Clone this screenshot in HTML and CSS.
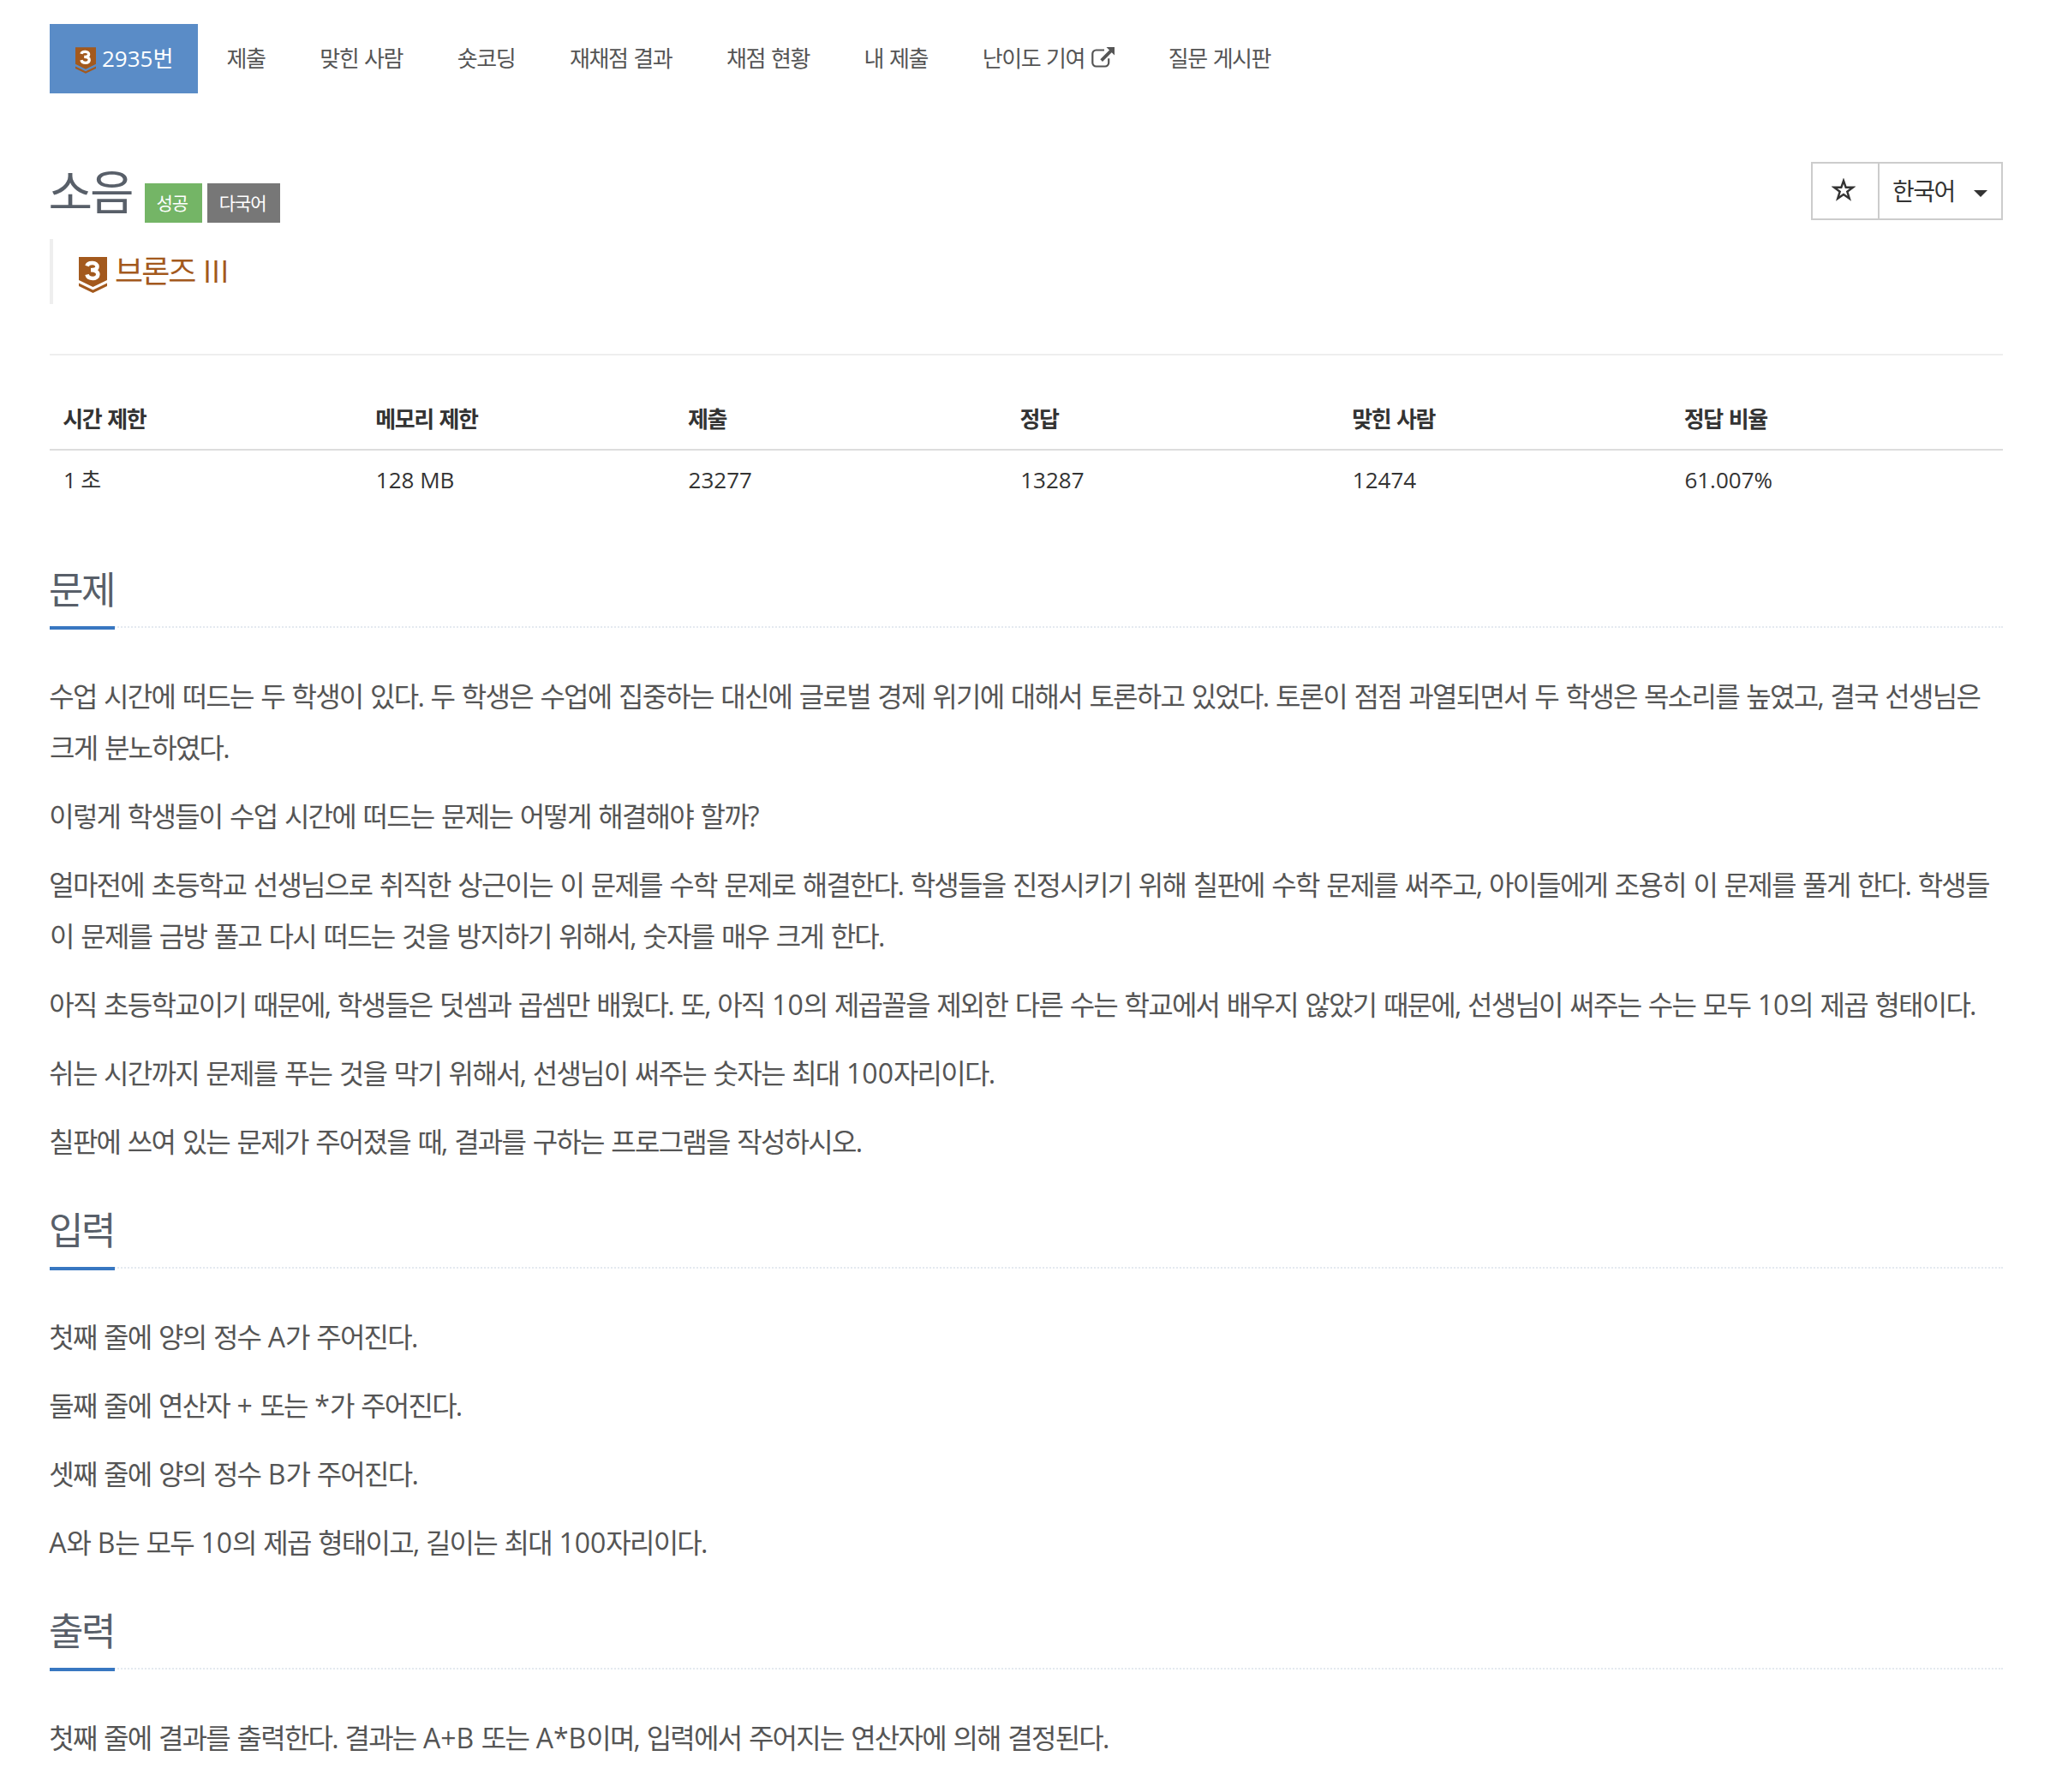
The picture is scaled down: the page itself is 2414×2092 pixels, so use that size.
FILE: index.html
```
<!DOCTYPE html>
<html lang="ko">
	<head>
		<meta charset="UTF-8" />
		<title>2935번: 소음</title>
		<link rel="stylesheet" href="styles.css">
	</head>
	<body>
		<svg width="0" height="0" class="sprite">
			<symbol id="tier" viewBox="0 0 33 42">
				<path fill="#a3591d" d="M0 0h33v27L16.500 35 0 27z" />
				<path fill="#a3591d" d="M0 30.500l16.500 8 16.500-8v3.500L16.500 42 0 34z" />
				<path fill="none" stroke="#fff" stroke-width="4.600" d="M9.500 10.500C11 5.500 22 6 21.500 11.500C21.300 14.500 18.500 15.300 14 15.300C20 15.300 22.500 17.500 22.300 20.500C22 26.500 11 26.500 9.500 20.500" />
			</symbol>
		</svg>
		<div class="container">
			<ul class="problem-menu">
				<li class="active"><a><svg class="tier-small"><use href="#tier" /></svg><span class="latin">2935</span>번</a></li>
				<li><a>제출</a></li>
				<li><a>맞힌 사람</a></li>
				<li><a>숏코딩</a></li>
				<li><a>재채점 결과</a></li>
				<li><a>채점 현황</a></li>
				<li><a>내 제출</a></li>
				<li>
					<a>난이도 기여 <svg class="external" viewBox="0 0 27 24"><path fill="none" stroke="#555" stroke-width="2.200" d="M15 3.500H5.500a4.200 4.200 0 0 0-4.200 4.200v10.600a4.200 4.200 0 0 0 4.200 4.200h10.500a4.200 4.200 0 0 0 4.200-4.200v-5" /><path fill="#555" d="M17.500 0H27v9.500l-3.300-3.200L13 17l-2.700-2.700L21 3.500z" /></svg></a>
				</li>
				<li><a>질문 게시판</a></li>
			</ul>

			<div class="page-header">
				<div class="title-row">
					<h1>소음</h1>
					<span class="label label-success">성공</span>
					<span class="label label-default">다국어</span>
				</div>
				<div class="btn-group">
					<button class="btn btn-star"><svg class="star" viewBox="0 0 28 27"><path fill="none" stroke="#333" stroke-width="2.400" d="M14 3l2.700 7.800h8.200l-6.600 4.900 2.500 8-6.800-4.800-6.800 4.800 2.500-8-6.600-4.900h8.200z" /></svg></button>
					<button class="btn btn-lang">한국어<span class="caret"></span></button>
				</div>
			</div>
			<blockquote><svg class="tier-large"><use href="#tier" /></svg>브론즈 <span class="latin">III</span></blockquote>
			<hr>

			<table>
				<thead>
					<tr>
						<th class="narrow">시간 제한</th>
						<th class="narrow">메모리 제한</th>
						<th>제출</th>
						<th>정답</th>
						<th>맞힌 사람</th>
						<th>정답 비율</th>
					</tr>
				</thead>
				<tbody>
					<tr>
						<td>1 초</td>
						<td class="latin">128 MB</td>
						<td class="latin">23277</td>
						<td class="latin">13287</td>
						<td class="latin">12474</td>
						<td class="latin">61.007%</td>
					</tr>
				</tbody>
			</table>

			<section>
				<div class="headline"><h2>문제</h2></div>
				<p>수업 시간에 떠드는 두 학생이 있다. 두 학생은 수업에 집중하는 대신에 글로벌 경제 위기에 대해서 토론하고 있었다. 토론이 점점 과열되면서 두 학생은 목소리를 높였고, 결국 선생님은 크게 분노하였다.</p>
				<p>이렇게 학생들이 수업 시간에 떠드는 문제는 어떻게 해결해야 할까?</p>
				<p>얼마전에 초등학교 선생님으로 취직한 상근이는 이 문제를 수학 문제로 해결한다. 학생들을 진정시키기 위해 칠판에 수학 문제를 써주고, 아이들에게 조용히 이 문제를 풀게 한다. 학생들이 문제를 금방 풀고 다시 떠드는 것을 방지하기 위해서, 숫자를 매우 크게 한다.</p>
				<p>아직 초등학교이기 때문에, 학생들은 덧셈과 곱셈만 배웠다. 또, 아직 <span class="latin">10</span>의 제곱꼴을 제외한 다른 수는 학교에서 배우지 않았기 때문에, 선생님이 써주는 수는 모두 <span class="latin">10</span>의 제곱 형태이다.</p>
				<p>쉬는 시간까지 문제를 푸는 것을 막기 위해서, 선생님이 써주는 숫자는 최대 <span class="latin">100</span>자리이다.</p>
				<p>칠판에 쓰여 있는 문제가 주어졌을 때, 결과를 구하는 프로그램을 작성하시오.</p>
			</section>

			<section>
				<div class="headline"><h2>입력</h2></div>
				<p>첫째 줄에 양의 정수 <span class="latin">A</span>가 주어진다.</p>
				<p>둘째 줄에 연산자 <span class="latin">+</span> 또는 <span class="latin">*</span>가 주어진다.</p>
				<p>셋째 줄에 양의 정수 <span class="latin">B</span>가 주어진다.</p>
				<p><span class="latin">A</span>와 <span class="latin">B</span>는 모두 <span class="latin">10</span>의 제곱 형태이고, 길이는 최대 <span class="latin">100</span>자리이다.</p>
			</section>

			<section>
				<div class="headline"><h2>출력</h2></div>
				<p>첫째 줄에 결과를 출력한다. 결과는 <span class="latin">A+B</span> 또는 <span class="latin">A*B</span>이며, 입력에서 주어지는 연산자에 의해 결정된다.</p>
			</section>
		</div>
	</body>
</html>
```
FILE: styles.css
```
* {
	box-sizing: border-box;
	letter-spacing: -0.055em;
	word-spacing: 0.062em;
}
body {
	font-family: "Open Sans", "Noto Sans CJK KR", sans-serif;
	font-size: 26px;
	line-height: 37px;
	margin: 0;
	color: #333;
	background-color: #fff;
}
.sprite {
	position: absolute;
}
.latin {
	letter-spacing: 0;
	word-spacing: 0;
}
.container {
	width: 2280px;
	margin-left: 58px;
	padding-top: 28px;
}
.problem-menu {
	display: flex;
	gap: 4px;
	margin: 0;
	padding: 0;
	list-style: none;
}
.problem-menu a {
	display: block;
	height: 81px;
	padding: 22px 30.2px 22px 29.5px;
	color: #555;
	white-space: nowrap;
}
.problem-menu .active a {
	width: 173px;
	padding-left: 30px;
	color: #fff;
	background-color: #5a8cc7;
}
.tier-small {
	width: 24px;
	height: 31px;
	margin-right: 7px;
	vertical-align: -8px;
}
.external {
	width: 27px;
	height: 24px;
	margin: 0 -1px 0 1px;
	vertical-align: -1px;
}
.page-header {
	display: flex;
	justify-content: space-between;
	height: 90px;
	margin-top: 80px;
}
.title-row {
	display: flex;
	align-items: flex-start;
}
h1 {
	margin: 0 15px 0 0;
	font-size: 56px;
	font-weight: 400;
	line-height: 69px;
	text-indent: -0.025em;
	color: #585f69;
}
.label {
	height: 46px;
	margin: 25px 6px 0 0;
	padding: 0 17px 0 14px;
	font-size: 21px;
	line-height: 46px;
	color: #fff;
}
.label-success {
	background-color: #74b566;
}
.label-default {
	background-color: #777;
}
.btn-group {
	display: flex;
	height: 68px;
}
.btn {
	display: flex;
	align-items: center;
	border: 2px solid #ccc;
	background-color: #fff;
	font-family: inherit;
	font-size: 28px;
	color: #333;
}
.btn-star {
	width: 80px;
	padding: 0 0 3px 22px;
}
.star {
	width: 28px;
	height: 27px;
}
.btn-lang {
	width: 146px;
	margin-left: -2px;
	padding: 0 16px 2px 15px;
	justify-content: space-between;
}
.caret {
	margin-top: 8px;
	border-top: 8px solid #333;
	border-left: 8px solid transparent;
	border-right: 8px solid transparent;
}
blockquote {
	height: 76px;
	margin: 0;
	padding: 12px 30px;
	border-left: 4px solid #eee;
	font-size: 36px;
	line-height: 52px;
	color: #a3591d;
}
.tier-large {
	width: 33px;
	height: 42px;
	margin-right: 9px;
	vertical-align: -12px;
}
hr {
	height: 2px;
	margin: 58px 0 40px;
	border: 0;
	background-color: #eee;
}
table {
	width: 100%;
	table-layout: fixed;
	border-spacing: 0;
}
th,
td {
	width: 17%;
	height: 69px;
	padding: 0 16px;
	text-align: left;
}
.narrow {
	width: 16%;
}
th {
	height: 71px;
	border-bottom: 2px solid #ddd;
	text-indent: -0.025em;
}
.headline {
	height: 86px;
	margin-bottom: 50px;
	border-bottom: 2px dotted #e4e9f0;
}
h2 {
	display: inline-block;
	width: 76px;
	height: 88px;
	margin: 0;
	border-bottom: 4px solid #3877c1;
	font-size: 44px;
	font-weight: 400;
	line-height: 82px;
	text-indent: -0.025em;
	color: #585f69;
	white-space: nowrap;
}
section {
	padding-top: 32px;
}
table + section {
	padding-top: 52px;
}
p {
	margin: 0 0 20px;
	font-size: 32px;
	line-height: 60px;
	text-indent: -0.025em;
	color: #555;
}
section p:last-child {
	margin-bottom: 0;
}
```
